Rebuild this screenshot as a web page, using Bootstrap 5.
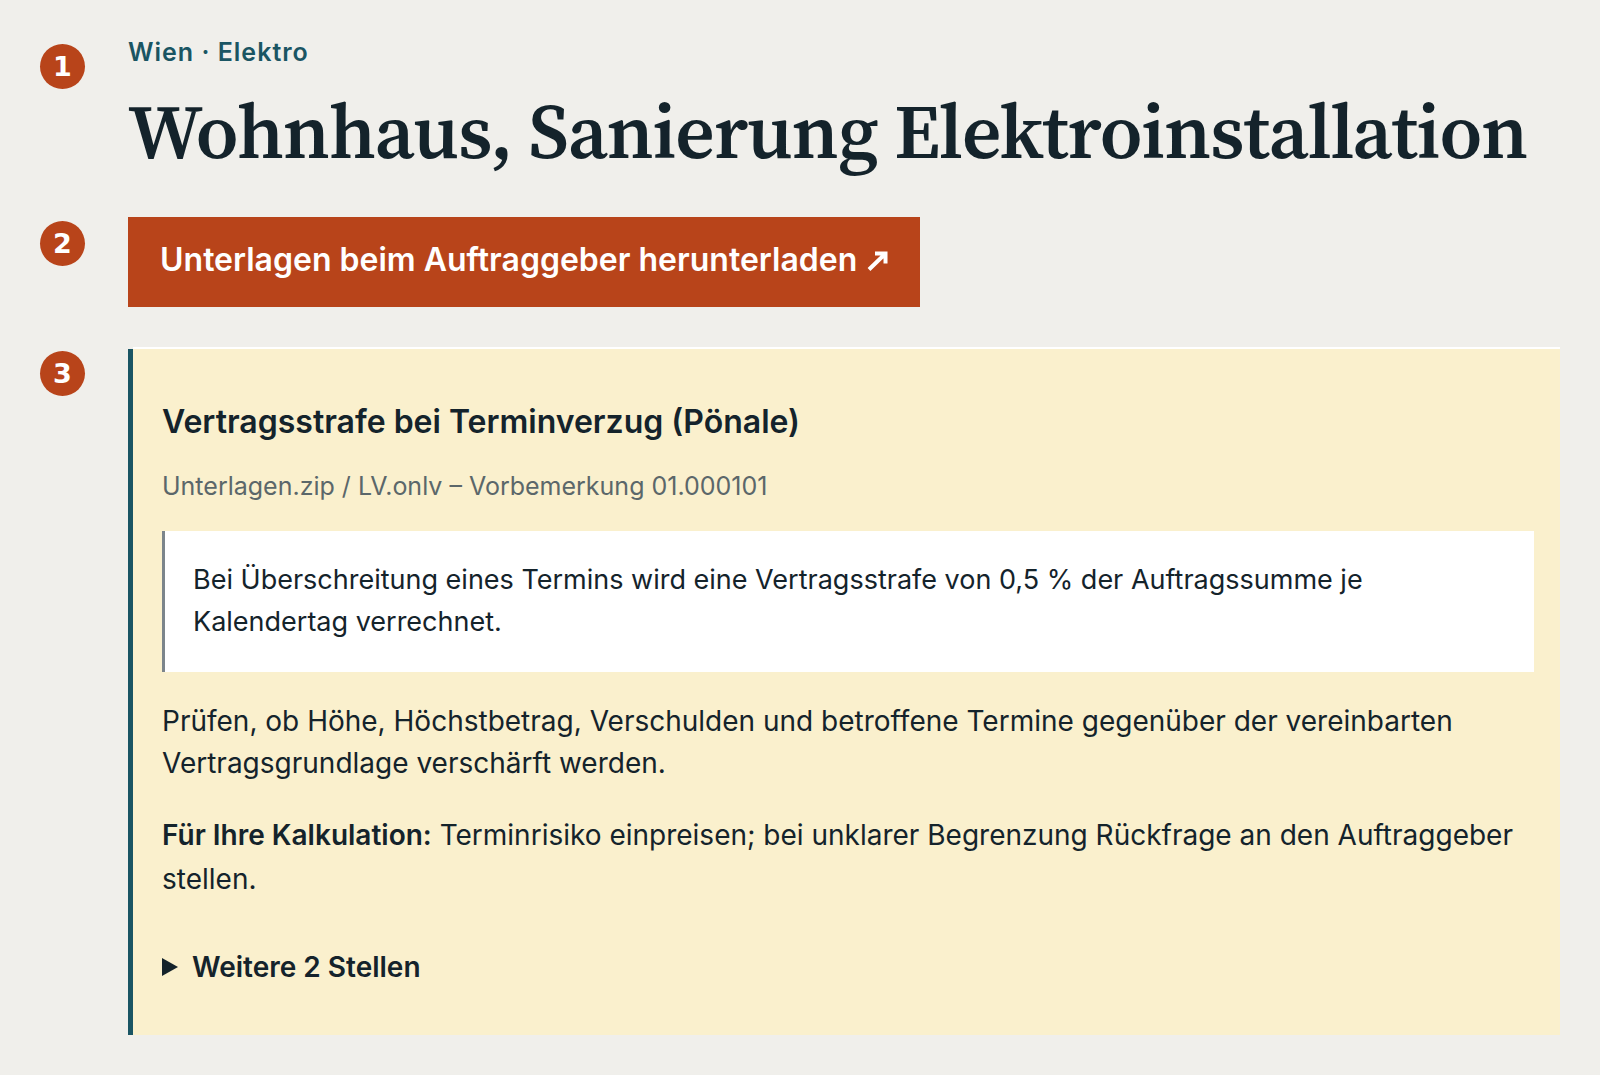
<!DOCTYPE html>
<html lang="de">
<head>
<meta charset="utf-8">
<meta name="viewport" content="width=device-width, initial-scale=1">
<title>Wohnhaus, Sanierung Elektroinstallation</title>
<link href="https://cdn.jsdelivr.net/npm/bootstrap@5.3.0/dist/css/bootstrap.min.css" rel="stylesheet">
<style>
  :root { --ink: #14232b; --teal: #1a5563; --rust: #b8441a; --sand: #faf0cd; }
  body { background: #f0efeb; color: var(--ink); font-family: Inter, "Liberation Sans", sans-serif; font-size: 28px; line-height: 42px; }
  .page { padding: 32px 40px 40px; }
  .step { gap: 43px; }
  .marker { width: 45px; height: 45px; background: var(--rust); font: bold 27px/45px "DejaVu Sans", sans-serif; }
  .step-intro .marker { margin-top: 12px; }
  .step-action { margin-top: 46px; }
  .step-action .marker { margin-top: 4px; }
  .step-finding { margin-top: 42px; }
  .step-finding .marker { margin-top: 2px; }
  .eyebrow { color: var(--teal); font-size: 25px; line-height: 40px; letter-spacing: 1px; }
  .headline { margin-top: 19px; font-family: "Source Serif 4", "Source Serif Pro", "Noto Serif CJK SC", "Liberation Serif", serif; font-size: 77px; line-height: 80px; font-weight: 600; letter-spacing: -1px; color: var(--ink); }
  .download { background: var(--rust); padding: 21px 32px 25px; font-size: 32px; line-height: 44px; border: 0; }
  .download svg { margin-left: 2px; vertical-align: baseline; }
  .download:hover { background: #9c3814; }
  .finding { border-left: 5px solid var(--teal); background: var(--sand); }
  .finding-body { margin-top: -2px; border-top: 2px solid #fff; padding: 51px 26px 46px 29px; }
  .finding-title { font-size: 32px; line-height: 44px; color: var(--ink); }
  .source { margin-top: 24px; font-size: 25px; line-height: 36px; color: #5b676a; }
  .excerpt { margin: 27px 0 28px; padding: 28px 28px 29px; border-left: 3px solid #7c858b; font-size: 27px; }
  .advice { margin-top: 29px; line-height: 44px; }
  .more { margin-top: 44px; line-height: 44px; }
  .more summary { gap: 14px; list-style: none; }
  .more summary::-webkit-details-marker { display: none; }
  .more[open] svg { transform: rotate(90deg); }
</style>
<script src="https://cdn.jsdelivr.net/npm/bootstrap@5.3.0/dist/js/bootstrap.bundle.min.js" defer></script>
</head>
<body>
<main class="page">
  <header class="step step-intro d-flex align-items-start">
    <span class="marker rounded-circle text-white text-center flex-shrink-0">1</span>
    <div class="flex-grow-1">
      <p class="eyebrow fw-semibold mb-0">Wien · Elektro</p>
      <h1 class="headline mb-0">Wohnhaus, Sanierung Elektroinstallation</h1>
    </div>
  </header>

  <div class="step step-action d-flex align-items-start">
    <span class="marker rounded-circle text-white text-center flex-shrink-0">2</span>
    <a class="download btn rounded-0 text-white fw-semibold" href="#unterlagen">Unterlagen beim Auftraggeber herunterladen <svg width="21" height="20" viewBox="0 0 21 20" fill="none" stroke="currentColor" stroke-width="4" aria-hidden="true"><path d="M8 2.5H18.5V12.5M18 3 2 18.5"/></svg></a>
  </div>

  <section class="step step-finding d-flex align-items-start">
    <span class="marker rounded-circle text-white text-center flex-shrink-0">3</span>
    <article class="finding flex-grow-1">
      <div class="finding-body">
        <h2 class="finding-title fw-semibold mb-0">Vertragsstrafe bei Terminverzug (Pönale)</h2>
        <p class="source mb-0">Unterlagen.zip / LV.onlv – Vorbemerkung 01.000101</p>
        <blockquote class="excerpt bg-white">Bei Überschreitung eines Termins wird eine Vertragsstrafe von 0,5 % der Auftragssumme je Kalendertag verrechnet.</blockquote>
        <p class="mb-0">Prüfen, ob Höhe, Höchstbetrag, Verschulden und betroffene Termine gegenüber der vereinbarten Vertragsgrundlage verschärft werden.</p>
        <p class="advice mb-0"><strong class="fw-semibold">Für Ihre Kalkulation:</strong> Terminrisiko einpreisen; bei unklarer Begrenzung Rückfrage an den Auftraggeber stellen.</p>
        <details class="more">
          <summary class="d-flex align-items-center fw-semibold">
            <svg width="16" height="18" viewBox="0 0 16 18" fill="currentColor" aria-hidden="true"><path d="M0 0 16 9 0 18Z"/></svg>
            Weitere 2 Stellen
          </summary>
        </details>
      </div>
    </article>
  </section>
</main>
</body>
</html>
